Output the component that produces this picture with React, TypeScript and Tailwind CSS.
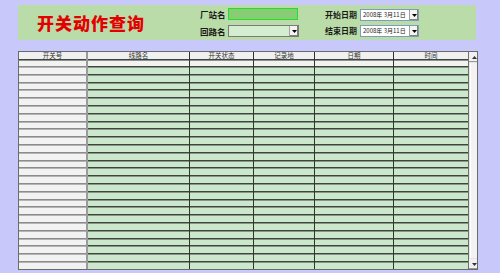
import React from "react";

const FONT = "font-['Noto_Sans_CJK_SC','Noto_Sans',sans-serif]";

const columns = [
  { title: "开关号", w: "w-[69px]" },
  { title: "线路名", w: "w-[102px]" },
  { title: "开关状态", w: "w-[64px]" },
  { title: "记录地", w: "w-[61px]" },
  { title: "日期", w: "w-[79px]" },
  { title: "时间", w: "w-[74px]" },
];

// row heights alternate so the grid lines land where the original ones do
const rowHeights = Array.from({ length: 26 }, (_, i) => (i % 5 === 2 ? "h-[7px]" : "h-[8px]"));

function DropButton() {
  return (
    <div className="flex h-full w-[9px] items-center justify-center border-l border-[#a0a0a0] bg-[#f4f4f4] shadow-[inset_-1px_-1px_0_#808080]">
      <svg width="5" height="3" viewBox="0 0 5 3">
        <path d="M0 0h5L2.5 3z" fill="#000" />
      </svg>
    </div>
  );
}

function DateBox() {
  return (
    <div className="flex h-[12px] w-[59px] items-stretch border border-[#7f9db9] bg-white">
      <span className="flex-1 pl-[2px] text-[6px] leading-[10px] whitespace-nowrap text-[#222]">2008年 3月11日</span>
      <DropButton />
    </div>
  );
}

export default function App() {
  return (
    <div className={`h-[273px] w-[500px] overflow-hidden bg-[#c8c8fa] pt-[5px] ${FONT}`}>
      {/* Search panel */}
      <div className="ml-[18px] flex h-[35px] w-[458px] bg-[#b9dca8]">
        <div className="flex w-[182px] items-center pl-[19px]">
          <h1 className="text-[17px] leading-none font-black tracking-[1px] whitespace-nowrap text-[#e30000]">开关动作查询</h1>
        </div>

        <div className="flex flex-col gap-[5px] pt-[3px]">
          <div className="flex h-[12px] items-center">
            <span className="w-[28px] text-[8.5px] font-bold whitespace-nowrap text-[#1a1a1a]">厂站名</span>
            <div className="h-[12px] w-[70px] border border-[#22e022] bg-[#88cc78]" />
          </div>
          <div className="flex h-[12px] items-center">
            <span className="w-[28px] text-[8.5px] font-bold whitespace-nowrap text-[#1a1a1a]">回路名</span>
            <div className="flex h-[12px] w-[71px] border border-[#7a7a7a] bg-[#d4ecd0]">
              <div className="flex-1" />
              <DropButton />
            </div>
          </div>
        </div>

        <div className="ml-[26px] flex flex-col gap-[4px] pt-[4px]">
          <div className="flex h-[12px] items-center">
            <span className="w-[35px] text-[8px] font-bold whitespace-nowrap text-[#1a1a1a]">开始日期</span>
            <DateBox />
          </div>
          <div className="flex h-[12px] items-center">
            <span className="w-[35px] text-[8px] font-bold whitespace-nowrap text-[#1a1a1a]">结束日期</span>
            <DateBox />
          </div>
        </div>
      </div>

      {/* Result grid */}
      <div className="mt-[11px] ml-[18px] flex h-[219px] w-[460px] overflow-hidden border border-[#6a6a6a] bg-[#f2f2f2]">
        <div className="flex">
          {columns.map((col, ci) => (
            <div
              key={col.title}
              className={`${col.w} flex shrink-0 flex-col ${
                ci === 0 ? "border-r-2 border-[#9a9a9a]" : ci < columns.length - 1 ? "border-r border-[#2e362e]" : ""
              }`}
            >
              <div className="flex h-[10px] items-center justify-center bg-[#f0f0f0] text-[6.5px] leading-none whitespace-nowrap text-[#333]">
                {col.title}
              </div>
              <div className="h-[10px] border-t border-[#3c463c] bg-[#f2f2f2] shadow-[inset_0_1px_0_#8a948a]" />
              {rowHeights.map((h, ri) => (
                <div
                  key={ri}
                  className={`${h} shrink-0 border-t ${
                    ci === 0
                      ? "border-[#8c8c8c] bg-[#f2f2f2] shadow-[inset_0_1px_0_#b4b4b4]"
                      : "border-[#3c463c] bg-[#cce8cc] shadow-[inset_0_1px_0_#8a948a]"
                  }`}
                />
              ))}
            </div>
          ))}
        </div>

        {/* Scrollbar */}
        <div className="flex w-[11px] shrink-0 flex-col border-l border-[#707070] bg-[#e4e4e4]">
          <div className="flex h-[10px] items-center justify-center bg-[#f0f0f0] shadow-[inset_-1px_-1px_0_#9a9a9a]">
            <svg width="5" height="3" viewBox="0 0 5 3">
              <path d="M2.5 0L5 3H0z" fill="#333" />
            </svg>
          </div>
          <div className="mx-[1px] my-[1px] flex-1 border-r border-[#a0a0a0] bg-[#f2f2f2] shadow-[inset_1px_0_0_#ffffff]" />
          <div className="flex h-[10px] items-center justify-center bg-[#f0f0f0] shadow-[inset_-1px_-1px_0_#9a9a9a]">
            <svg width="5" height="3" viewBox="0 0 5 3">
              <path d="M0 0h5L2.5 3z" fill="#333" />
            </svg>
          </div>
        </div>
      </div>
    </div>
  );
}
